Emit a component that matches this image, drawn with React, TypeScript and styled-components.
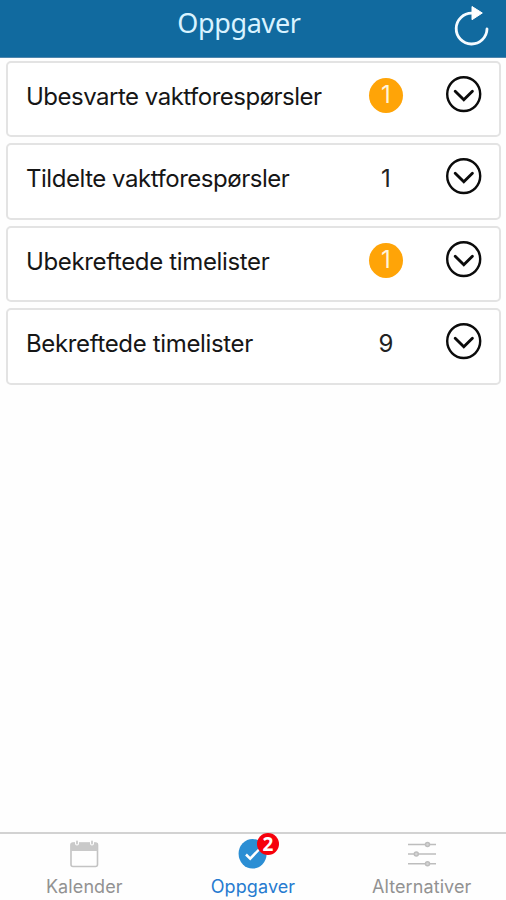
import React from "react";
import styled, { createGlobalStyle } from "styled-components";

const GlobalStyle = createGlobalStyle`
  * { box-sizing: border-box; }
  body { margin: 0; background: #fefefe; }
`;

const Screen = styled.div`
  display: flex;
  flex-direction: column;
  width: 100%;
  height: 100vh;
  overflow: hidden;
  background: #fefefe;
  font-family: Inter, "Liberation Sans", sans-serif;
  color: #161616;
`;

const Header = styled.header`
  display: grid;
  grid-template-columns: 24px 1fr 52px;
  flex: none;
  height: 58px;
  background: #116a9f;
  border-bottom: 1px solid #4f86ad;
`;

const Title = styled.h1`
  grid-column: 2;
  margin: 0;
  text-align: center;
  font: 400 27px/45px "Noto Sans", sans-serif;
  letter-spacing: -0.35px;
  color: #d9f3ff;
`;

const RefreshButton = styled.button`
  display: block;
  border: 0;
  padding: 0;
  background: none;
  svg { display: block; }
`;

const TaskList = styled.main`
  display: flex;
  flex: 1;
  flex-direction: column;
  gap: 6px;
  padding: 3px 5px 0 6px;
`;

const TaskCard = styled.section`
  display: grid;
  grid-template-columns: 1fr 40px 40px 36px;
  align-items: start;
  flex: none;
  height: 76.4px;
  padding: 13px 17px 0 18px;
  border: 2px solid #e3e3e3;
  border-radius: 5px;
  background: #fff;
`;

const TaskName = styled.span<{ $spacing: number }>`
  padding-top: 6px;
  font-size: 24px;
  line-height: 30px;
  letter-spacing: ${(p) => p.$spacing}px;
  white-space: nowrap;
`;

const Count = styled.span<{ $pending: boolean }>`
  justify-self: center;
  width: 34px;
  height: 35px;
  margin-top: ${(p) => (p.$pending ? 2 : 4)}px;
  border-radius: 50%;
  background: ${(p) => (p.$pending ? "#ffa407" : "transparent")};
  color: ${(p) => (p.$pending ? "#fff4dc" : "#222")};
  font-size: 24px;
  line-height: ${(p) => (p.$pending ? 33 : 34)}px;
  text-align: center;
`;

const ExpandButton = styled.button`
  grid-column: 4;
  border: 0;
  padding: 0;
  background: none;
  svg { display: block; }
`;

const TabBar = styled.nav`
  display: grid;
  grid-template-columns: repeat(3, 1fr);
  flex: none;
  height: 68px;
  border-top: 2px solid #d2d2d2;
`;

const Tab = styled.a<{ $active?: boolean }>`
  display: flex;
  flex-direction: column;
  align-items: center;
  padding-top: 4px;
  color: ${(p) => (p.$active ? "#267bd0" : "#929292")};
  font-size: 18px;
  line-height: 26px;
`;

const TabIcon = styled.span`
  position: relative;
  height: 36px;
  svg { display: block; }
`;

const TabLabel = styled.span<{ $spacing: number }>`
  letter-spacing: ${(p) => p.$spacing}px;
`;

const Notification = styled.span`
  position: absolute;
  top: -5px;
  left: 19px;
  width: 22px;
  height: 22px;
  border-radius: 50%;
  background: #f6000c;
  color: #fff;
  font: 700 19px/22px "Noto Sans", sans-serif;
  text-align: center;
`;

const RefreshIcon = () => (
  <svg width="52" height="57" viewBox="0 0 52 57" fill="none">
    <path d="M18 13.2A15.4 15.4 0 1 0 33 29" stroke="#f6fbff" strokeWidth="2.8" strokeLinecap="round" />
    <path d="M18 6.5 28.3 13 18 19.7Z" fill="#fff" stroke="#fff" strokeLinejoin="round" />
  </svg>
);

const ChevronIcon = () => (
  <svg width="36" height="37" viewBox="0 0 36 37" fill="none" stroke="#0b0b0b">
    <ellipse cx="17.7" cy="18.1" rx="16.5" ry="16.9" strokeWidth="2.4" />
    <path d="m9.2 15.2 8.6 8.5 8.6-8.5" strokeWidth="2.9" strokeLinecap="round" />
  </svg>
);

const CalendarIcon = () => (
  <svg width="30" height="32" viewBox="0 0 30 32" fill="none">
    <rect x="2" y="5" width="26.5" height="23.5" rx="2" stroke="#c3c3c3" strokeWidth="1.6" />
    <path d="M2 5h26.5v8H2Z" fill="#c9c9c9" />
    <path d="M8 3v2.5M23 3v2.5" stroke="#fefefe" strokeWidth="4" strokeLinecap="round" />
    <path d="M8 3.5v2M23 3.5v2" stroke="#c9c9c9" strokeWidth="1.8" strokeLinecap="round" />
  </svg>
);

const CheckIcon = () => (
  <svg width="30" height="32" viewBox="0 0 30 32" fill="none">
    <ellipse cx="14.6" cy="15.8" rx="14" ry="14.8" fill="#2b8ed4" />
    <path d="m8 16.5 4.2 4.2L21 11.5" stroke="#fff" strokeWidth="2.5" />
  </svg>
);

const SlidersIcon = () => (
  <svg width="30" height="32" viewBox="0 0 30 32" stroke="#bdbdbd" strokeWidth="1.5" fill="#d5d5d5">
    <path d="M1 6.6h28M1 16.1h28M1 25.7h28" />
    <circle cx="20.5" cy="6.6" r="2" />
    <circle cx="9.3" cy="16.1" r="2" />
    <circle cx="20.5" cy="25.7" r="2" />
  </svg>
);

const tasks = [
  { name: "Ubesvarte vaktforespørsler", count: 1, pending: true, spacing: -0.5 },
  { name: "Tildelte vaktforespørsler", count: 1, pending: false, spacing: -0.47 },
  { name: "Ubekreftede timelister", count: 1, pending: true, spacing: -0.35 },
  { name: "Bekreftede timelister", count: 9, pending: false, spacing: -0.35 },
];

export default function App() {
  return (
    <>
      <GlobalStyle />
      <Screen>
        <Header>
          <Title>Oppgaver</Title>
          <RefreshButton aria-label="Oppdater"><RefreshIcon /></RefreshButton>
        </Header>
        <TaskList>
          {tasks.map((task) => (
            <TaskCard key={task.name}>
              <TaskName $spacing={task.spacing}>{task.name}</TaskName>
              <Count $pending={task.pending}>{task.count}</Count>
              <ExpandButton aria-label={task.name}><ChevronIcon /></ExpandButton>
            </TaskCard>
          ))}
        </TaskList>
        <TabBar>
          <Tab>
            <TabIcon><CalendarIcon /></TabIcon>
            <TabLabel $spacing={0.1}>Kalender</TabLabel>
          </Tab>
          <Tab $active>
            <TabIcon><CheckIcon /><Notification>2</Notification></TabIcon>
            <TabLabel $spacing={0.1}>Oppgaver</TabLabel>
          </Tab>
          <Tab>
            <TabIcon><SlidersIcon /></TabIcon>
            <TabLabel $spacing={0.1}>Alternativer</TabLabel>
          </Tab>
        </TabBar>
      </Screen>
    </>
  );
}
